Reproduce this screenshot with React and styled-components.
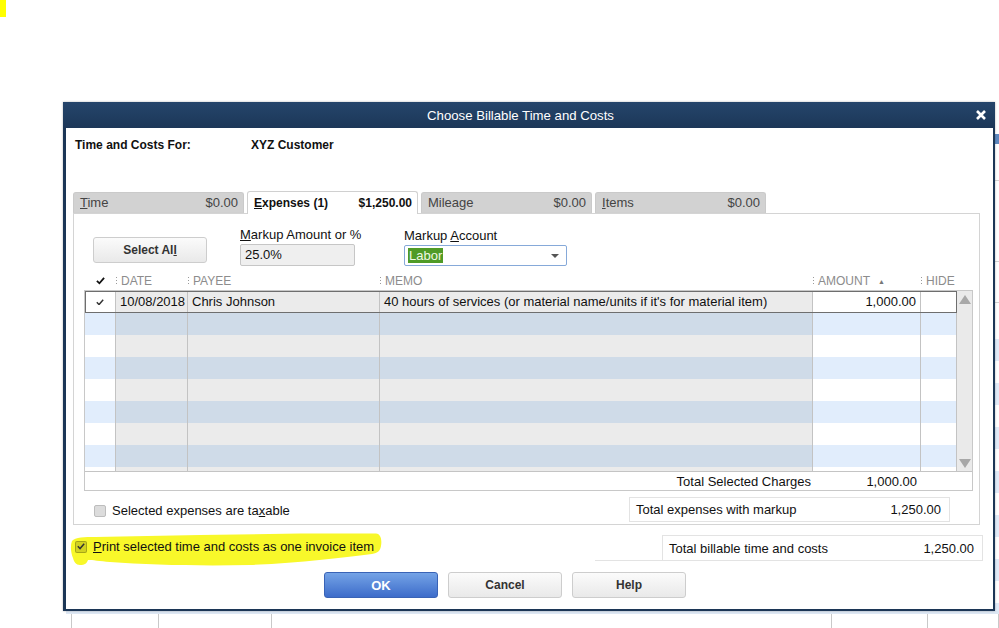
import React from 'react';
import styled, { createGlobalStyle } from 'styled-components';

const GlobalStyle = createGlobalStyle`
  html, body {
    margin: 0;
    padding: 0;
    background: #fff;
  }
  body {
    font-family: "Liberation Sans", Arial, sans-serif;
    color: #111;
  }
`;

const COLS = '31px 72px 192px 433px 108px 36px';

const TABS = [
  { key: 'time', label: 'Time', hot: 'T', amount: '$0.00' },
  { key: 'expenses', label: 'Expenses (1)', hot: 'E', amount: '$1,250.00', active: true },
  { key: 'mileage', label: 'Mileage', hot: '', amount: '$0.00' },
  { key: 'items', label: 'Items', hot: 'I', amount: '$0.00' },
];

const ROWS = [
  {
    check: true,
    date: '10/08/2018',
    payee: 'Chris Johnson',
    memo: "40 hours of services (or material name/units if it's for material item)",
    amount: '1,000.00',
  },
  {}, {}, {}, {}, {}, {}, {}, {},
];

// --- page / background window ---

const Page = styled.div`
  position: relative;
  width: 999px;
  height: 628px;
  overflow: hidden;
  padding: 102px 0 0 63px;
  box-sizing: border-box;
`;

const Marker = styled.div`
  position: absolute;
  left: 0;
  top: 0;
  width: 6px;
  height: 17px;
  background: #ffff00;
`;

const BackWindow = styled.div`
  position: absolute;
  left: 66px;
  right: 0;
  top: 128px;
  bottom: 0;
  display: flex;
  flex-direction: column;
  z-index: 0;
`;

const BackBand = styled.div`
  margin-top: 6px;
  height: 10px;
  background: #5d88bf;
`;

const BackLine = styled.div`
  margin-top: ${({ $gap }) => $gap}px;
  height: 1px;
  background: #d4d4d4;
`;

const BackStripes = styled.div`
  flex: 1;
  margin-top: 14px;
  background: repeating-linear-gradient(#fff 0 22px, #e1ebf8 22px 44px);
`;

const BackGrid = styled.div`
  height: 14px;
  border-top: 3px solid #dde7f3;
  background: #fff;
  display: grid;
  grid-template-columns: 6px 87px 113px 560px 96px 1fr;
  & > div {
    border-right: 1px solid #c9c9c9;
  }
`;

// --- dialog frame ---

const Dialog = styled.div`
  position: relative;
  z-index: 1;
  width: 932px;
  box-sizing: border-box;
  background: #1c3656;
  padding: 0 2px 2px 3px;
  box-shadow: 0 0 2px rgba(0, 0, 0, 0.3);
`;

const TitleBar = styled.div`
  height: 26px;
  display: flex;
  align-items: center;
  background: linear-gradient(#25456b, #1c3758);
  margin: 0 -2px 0 -3px;
  padding: 0 2px 0 3px;
`;

const TitleText = styled.div`
  flex: 1;
  text-align: center;
  color: #fff;
  font-size: 13.2px;
`;

const CloseBox = styled.div`
  width: 18px;
  display: flex;
  align-items: center;
`;

const Body = styled.div`
  background: #fff;
  padding: 10px 13px 11px 7px;
`;

const ForRow = styled.div`
  display: flex;
  padding-left: 2px;
  font-size: 12px;
  font-weight: bold;
  line-height: 14px;
`;

const ForLabel = styled.div`
  width: 176px;
`;

// --- tabs ---

const TabRow = styled.div`
  margin-top: 39px;
  height: 22px;
  display: flex;
  align-items: flex-end;
  gap: 3px;
`;

const Tab = styled.div`
  position: relative;
  z-index: 2;
  width: 171px;
  box-sizing: border-box;
  height: ${({ $active }) => ($active ? 23 : 21)}px;
  margin-bottom: ${({ $active }) => ($active ? -1 : 0)}px;
  display: flex;
  align-items: center;
  justify-content: space-between;
  padding: 0 5px 0 6px;
  border-radius: 3px 3px 0 0;
  background: ${({ $active }) => ($active ? '#fff' : '#d2d2d2')};
  border: 1px solid ${({ $active }) => ($active ? '#d0d0d0' : '#cacaca')};
  border-bottom: ${({ $active }) => ($active ? 'none' : '1px solid #d0d0d0')};
  color: ${({ $active }) => ($active ? '#111' : '#444')};
  font-size: ${({ $active }) => ($active ? 12 : 13)}px;
  font-weight: ${({ $active }) => ($active ? 'bold' : 'normal')};
`;

const Panel = styled.div`
  position: relative;
  z-index: 1;
  height: 312px;
  box-sizing: border-box;
  border: 1px solid #d4d4d4;
  display: flex;
  flex-direction: column;
`;

// --- controls ---

const Controls = styled.div`
  margin-top: 14px;
  padding-left: 19px;
  display: flex;
  align-items: flex-end;
`;

const Button = styled.button`
  width: 114px;
  height: 26px;
  box-sizing: border-box;
  border-radius: 3px;
  font-family: inherit;
  font-weight: bold;
  cursor: pointer;
  padding: 0;
  color: ${({ $primary }) => ($primary ? '#fff' : '#333')};
  border: 1px solid ${({ $primary }) => ($primary ? '#3963b6' : '#cdcdcd')};
  background: ${({ $primary }) =>
    $primary ? 'linear-gradient(#74a3e6, #3d6cca)' : 'linear-gradient(#fbfbfb, #e9e9e9)'};
  font-size: ${({ $primary }) => ($primary ? 13 : 12)}px;
`;

const SelectAll = styled(Button)`
  margin-bottom: 3px;
`;

const Field = styled.div`
  width: ${({ $w }) => $w}px;
  margin-left: ${({ $gap }) => $gap}px;
  display: flex;
  flex-direction: column;
  gap: 2px;
`;

const FieldLabel = styled.div`
  font-size: 13px;
  line-height: 14px;
  white-space: nowrap;
`;

const TextInput = styled.div`
  width: 115px;
  height: 22px;
  box-sizing: border-box;
  background: #efefef;
  border: 1px solid #c6c6c6;
  border-radius: 2px;
  font-size: 13px;
  line-height: 20px;
  padding-left: 4px;
`;

const SelectBox = styled.div`
  position: relative;
  width: 163px;
  height: 21px;
  box-sizing: border-box;
  border: 1px solid #86a9d9;
  border-radius: 2px;
  padding: 2px 3px;
  font-size: 13px;
  line-height: 15px;
  &::after {
    content: '';
    position: absolute;
    right: 7px;
    top: 8px;
    border-left: 4px solid transparent;
    border-right: 4px solid transparent;
    border-top: 4px solid #555;
  }
`;

const Highlight = styled.span`
  display: inline-block;
  background: #4f9b27;
  color: #eef8e4;
  padding: 0 1px;
`;

// --- grid ---

const HeadRow = styled.div`
  margin: 6px 0 0 11px;
  height: 18px;
  display: grid;
  grid-template-columns: ${COLS};
  align-items: center;
  font-size: 12px;
  color: #8c8c8c;
`;

const HeadCell = styled.div`
  display: flex;
  align-items: center;
  justify-content: ${({ $center }) => ($center ? 'center' : 'flex-start')};
  gap: 4px;
`;

const Grip = styled.span`
  width: 1px;
  height: 9px;
  background: repeating-linear-gradient(#9a9a9a 0 1px, transparent 1px 3px);
`;

const SortArrow = styled.span`
  font-size: 7px;
  margin-left: 4px;
  color: #777;
`;

const GridBox = styled.div`
  margin-left: 10px;
  width: 889px;
  box-sizing: border-box;
  border: 1px solid #c8c8c8;
`;

const GridBody = styled.div`
  height: 181px;
  box-sizing: border-box;
  border-bottom: 1px solid #c4c4c4;
  display: flex;
  overflow: hidden;
`;

const Rows = styled.div`
  width: 872px;
`;

const Row = styled.div`
  position: relative;
  height: 22px;
  display: grid;
  grid-template-columns: ${COLS};
  &::after {
    content: '';
    display: ${({ $selected }) => ($selected ? 'block' : 'none')};
    position: absolute;
    inset: 0;
    border: 1px solid #6e6e6e;
    pointer-events: none;
  }
`;

const Cell = styled.div`
  box-sizing: border-box;
  border-right: 1px solid #c3c3c3;
  font-size: 13px;
  line-height: 21px;
  padding: 0 4px;
  white-space: nowrap;
  overflow: hidden;
  text-align: ${({ $right }) => ($right ? 'right' : 'left')};
  display: ${({ $center }) => ($center ? 'flex' : 'block')};
  align-items: center;
  justify-content: center;
  background: ${({ $dark, $blue }) =>
    $blue ? ($dark ? '#cfdbe8' : '#e1edfc') : $dark ? '#ebebeb' : '#fff'};
`;

const Scrollbar = styled.div`
  width: 16px;
  background: #eaeaea;
  display: flex;
  flex-direction: column;
  justify-content: space-between;
  align-items: center;
  padding: 4px 0 3px;
  box-sizing: border-box;
`;

const Arrow = styled.span`
  width: 0;
  height: 0;
  border-left: 6px solid transparent;
  border-right: 6px solid transparent;
  ${({ $down }) => ($down ? 'border-top' : 'border-bottom')}: 9px solid #a8a8a8;
`;

const TotalRow = styled.div`
  height: 18px;
  display: grid;
  grid-template-columns: 728px 108px;
  font-size: 13px;
  line-height: 19px;
  text-align: right;
  & > div:first-child {
    padding-right: 2px;
  }
  & > div:last-child {
    padding-right: 4px;
  }
`;

// --- below grid ---

const TaxRow = styled.div`
  margin-top: 6px;
  height: 25px;
  display: flex;
  align-items: center;
  justify-content: space-between;
  padding: 0 29px 0 20px;
  font-size: 13px;
`;

const CheckLine = styled.label`
  position: relative;
  z-index: 1;
  display: flex;
  align-items: center;
  gap: 6px;
  font-size: 13px;
  line-height: 15px;
`;

const TaxCheck = styled(CheckLine)`
  margin-top: 2px;
`;

const Box = styled.span`
  width: 12px;
  height: 12px;
  box-sizing: border-box;
  border-radius: 2px;
  display: flex;
  align-items: center;
  justify-content: center;
  background: ${({ $tint }) => ($tint ? 'rgba(60, 60, 0, 0.2)' : '#dcdcdc')};
  border: 1px solid ${({ $tint }) => ($tint ? 'rgba(60, 60, 0, 0.3)' : '#bdbdbd')};
`;

const SumBox = styled.div`
  width: ${({ $w }) => $w}px;
  height: 25px;
  box-sizing: border-box;
  border: 1px solid #e3e3e3;
  display: flex;
  align-items: center;
  justify-content: space-between;
  padding: 0 8px 0 6px;
  font-size: 13px;
`;

const FooterRow = styled.div`
  margin: 10px -3px 0 0;
  height: 26px;
  display: flex;
  justify-content: space-between;
`;

const FooterLeft = styled.div`
  position: relative;
  padding: 4px 0 0 2px;
`;

const Marks = styled.svg`
  position: absolute;
  left: -6px;
  top: -5px;
  z-index: 0;
`;

const Strip = styled.div`
  width: 388px;
  border-bottom: 1px solid #e3e3e3;
  display: flex;
  justify-content: flex-end;
  & > div {
    border-bottom: 0;
  }
`;

const ButtonRow = styled.div`
  margin: 11px 0 0 251px;
  display: flex;
  gap: 10px;
`;

const Hot = ({ text, hot }) => {
  const i = hot ? text.indexOf(hot) : -1;
  if (i < 0) return text;
  return (
    <>
      {text.slice(0, i)}
      <u>{text[i]}</u>
      {text.slice(i + 1)}
    </>
  );
};

const Tick = ({ size = 8, bold }) => (
  <svg width={size} height={size * 0.8} viewBox="0 0 10 8">
    <path
      d="M1 4.2 L3.8 7 L9 1"
      fill="none"
      stroke={bold ? '#111' : '#333'}
      strokeWidth={bold ? 2 : 1.8}
    />
  </svg>
);

export default function App() {
  return (
    <>
      <GlobalStyle />
      <Page>
        <Marker />
        <BackWindow>
          <BackBand />
          <BackLine $gap={36} />
          <BackLine $gap={80} />
          <BackLine $gap={40} />
          <BackStripes />
          <BackGrid>
            <div /><div /><div /><div /><div /><div />
          </BackGrid>
        </BackWindow>

        <Dialog>
          <TitleBar>
            <TitleText>Choose Billable Time and Costs</TitleText>
            <CloseBox>
              <svg width="12" height="12" viewBox="0 0 12 12">
                <path d="M2 2 L10 10 M10 2 L2 10" stroke="#fff" strokeWidth="2.6" />
              </svg>
            </CloseBox>
          </TitleBar>

          <Body>
            <ForRow>
              <ForLabel>Time and Costs For:</ForLabel>
              <div>XYZ Customer</div>
            </ForRow>

            <TabRow>
              {TABS.map((t) => (
                <Tab key={t.key} $active={t.active}>
                  <span><Hot text={t.label} hot={t.hot} /></span>
                  <span>{t.amount}</span>
                </Tab>
              ))}
            </TabRow>

            <Panel>
              <Controls>
                <SelectAll>Select Al<u>l</u></SelectAll>
                <Field $gap={33} $w={115}>
                  <FieldLabel><u>M</u>arkup Amount or %</FieldLabel>
                  <TextInput>25.0%</TextInput>
                </Field>
                <Field $gap={49} $w={163}>
                  <FieldLabel>Markup <u>A</u>ccount</FieldLabel>
                  <SelectBox><Highlight>Labor</Highlight></SelectBox>
                </Field>
              </Controls>

              <HeadRow>
                <HeadCell $center><Tick size={9} bold /></HeadCell>
                <HeadCell><Grip />DATE</HeadCell>
                <HeadCell><Grip />PAYEE</HeadCell>
                <HeadCell><Grip />MEMO</HeadCell>
                <HeadCell><Grip />AMOUNT<SortArrow>▲</SortArrow></HeadCell>
                <HeadCell><Grip />HIDE</HeadCell>
              </HeadRow>

              <GridBox>
                <GridBody>
                  <Rows>
                    {ROWS.map((r, i) => {
                      const blue = i % 2 === 1;
                      return (
                        <Row key={i} $selected={i === 0}>
                          <Cell $blue={blue} $center>{r.check && <Tick />}</Cell>
                          <Cell $blue={blue} $dark>{r.date}</Cell>
                          <Cell $blue={blue} $dark>{r.payee}</Cell>
                          <Cell $blue={blue} $dark>{r.memo}</Cell>
                          <Cell $blue={blue} $right>{r.amount}</Cell>
                          <Cell $blue={blue} />
                        </Row>
                      );
                    })}
                  </Rows>
                  <Scrollbar>
                    <Arrow />
                    <Arrow $down />
                  </Scrollbar>
                </GridBody>
                <TotalRow>
                  <div>Total Selected Charges</div>
                  <div>1,000.00</div>
                </TotalRow>
              </GridBox>

              <TaxRow>
                <TaxCheck>
                  <Box />
                  <span>Selected expenses are ta<u>x</u>able</span>
                </TaxCheck>
                <SumBox $w={321}>
                  <span>Total expenses with markup</span>
                  <span>1,250.00</span>
                </SumBox>
              </TaxRow>
            </Panel>

            <FooterRow>
              <FooterLeft>
                <Marks width="320" height="40" viewBox="67 530 320 40">
                  <path
                    d="M72 541 C75 537 85 537 95 537 L200 535 L300 533.5 L376 533.5 C381 534 382 540 381 546 C380 551 378 553 372 554 C340 558 300 563 250 565 C200 566 150 565 110 562 C100 561 92 560 88 560 C87 563 85 565 80 565 C76 565 74 562 73 558 C71 553 70 546 72 541 Z"
                    fill="#f8f82a"
                  />
                </Marks>
                <CheckLine>
                  <Box $tint><Tick size={8} /></Box>
                  <span><u>P</u>rint selected time and costs as one invoice item</span>
                </CheckLine>
              </FooterLeft>
              <Strip>
                <SumBox $w={321}>
                  <span>Total billable time and costs</span>
                  <span>1,250.00</span>
                </SumBox>
              </Strip>
            </FooterRow>

            <ButtonRow>
              <Button $primary>OK</Button>
              <Button>Cancel</Button>
              <Button>Help</Button>
            </ButtonRow>
          </Body>
        </Dialog>
      </Page>
    </>
  );
}
